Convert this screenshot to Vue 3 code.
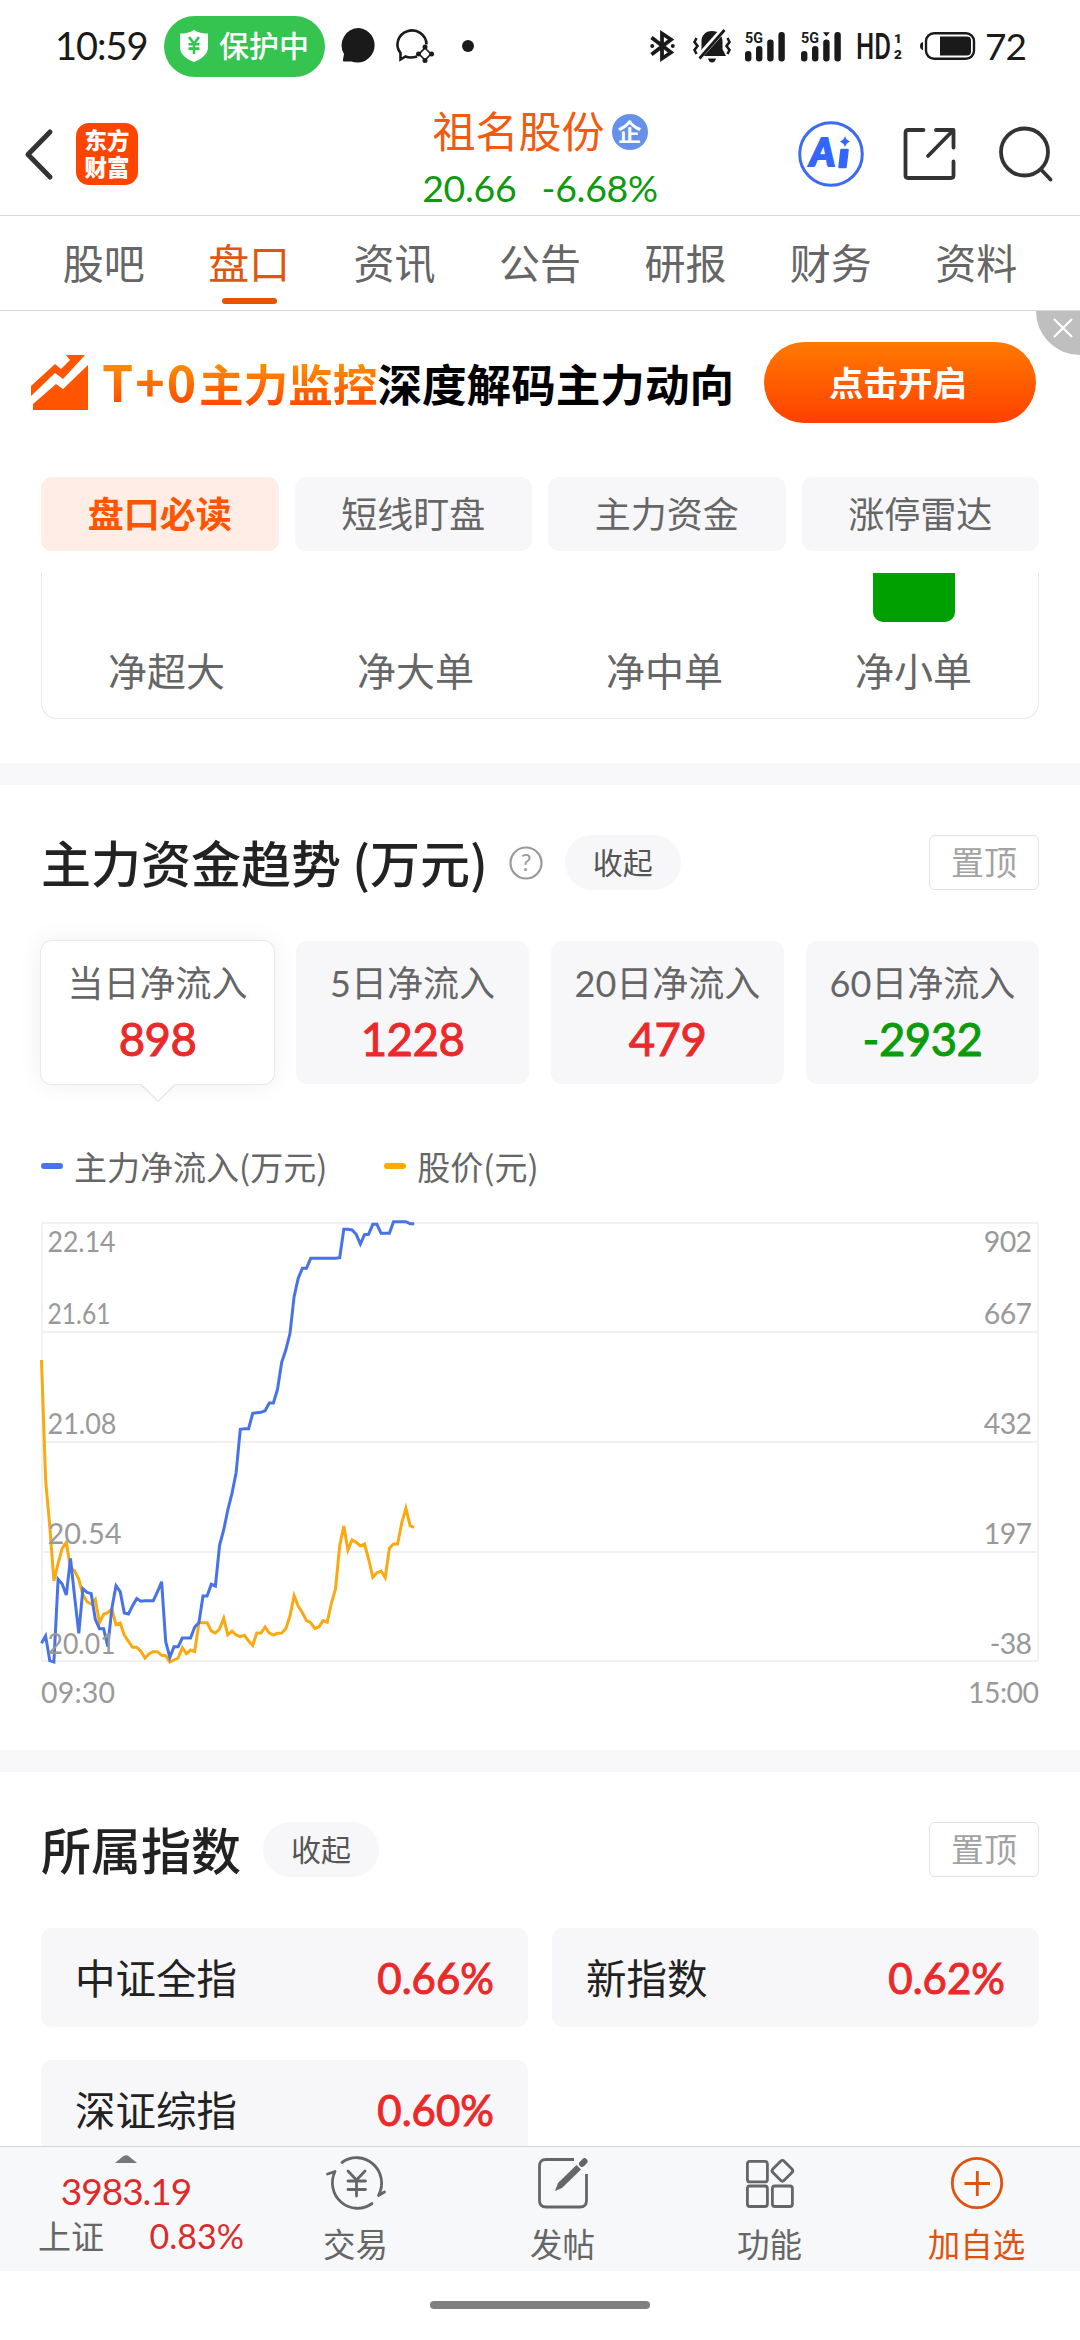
<template>
  <div class="screen">
    <div class="status">
      <span class="clock">10:59</span>
      <div class="shield-pill">
        <svg width="28" height="32" viewBox="0 0 28 32">
          <path d="M14 0C18 2.600 23 3.600 28 3.600V17C28 24 22 29 14 32C6 29 0 24 0 17V3.600C5 3.600 10 2.600 14 0Z" fill="#fff" />
          <path d="M9 7L14 13.500L19 7M14 13.500V24M8.500 14.200H19.500M8.500 18.600H19.500" fill="none" stroke="#36c450" stroke-width="2.600" />
        </svg>
        <span>保护中</span>
      </div>
      <svg class="bubble" width="36" height="36" viewBox="0 0 36 36">
        <path d="M18 0A17.300 17.300 0 1 1 10.500 33.500H3Q1.500 33.500 2 31.500L3 26A17.300 17.300 0 0 1 18 0Z" fill="#1a1a1a" />
      </svg>
      <svg class="bubble-star" width="39" height="34" viewBox="0 0 39 34" fill="none" stroke="#1a1a1a">
        <path d="M22 27.500Q15 29.500 10.500 27.500L5.500 30.500V24A14.500 14 0 1 1 31.500 15.500" stroke-width="2.600" />
        <path d="M30 19L36 25L30 31L24 25Z" stroke-width="1.600" fill="#fff" />
        <g fill="#1a1a1a" stroke="none">
          <circle cx="30" cy="18" r="2.500" /><circle cx="36.500" cy="25" r="2.500" />
          <circle cx="30" cy="31.500" r="2.500" /><circle cx="23.500" cy="25" r="2.500" />
        </g>
      </svg>
      <i class="dot"></i>

      <div class="status-right">
        <svg width="25" height="32" viewBox="0 0 25 32">
          <path d="M1.500 7.500L21 22.500L12 28.500V3.500L21 9.500L1.500 24.500" fill="none" stroke="#1a1a1a" stroke-width="3.800" />
          <circle cx="2.200" cy="16" r="2" fill="#1a1a1a" /><circle cx="22.800" cy="16" r="2" fill="#1a1a1a" />
        </svg>
        <svg class="bell" width="38" height="34" viewBox="0 0 38 34">
          <path d="M19 2C26 2 29.500 7 29.500 12V20L33 27H5L8.500 20V12C8.500 7 12 2 19 2ZM15 29.500H23Q22 33.500 19 33.500Q16 33.500 15 29.500Z" fill="#1a1a1a" />
          <path d="M5 29L31 0" stroke="#fff" stroke-width="6" />
          <path d="M6.500 29.500L31.500 1" stroke="#1a1a1a" stroke-width="2.800" />
          <path d="M3.500 9L1.500 13L4.500 17L1.500 21L3.500 25M34.500 9L36.500 13L33.500 17L36.500 21L34.500 25" fill="none" stroke="#1a1a1a" stroke-width="2.600" />
        </svg>
        <svg v-for="n in 2" :key="n" :class="'signal signal-' + n" width="40" height="31" viewBox="0 0 40 31" fill="#1a1a1a">
          <text x="0" y="12" font-size="15" font-weight="700" textLength="18" lengthAdjust="spacingAndGlyphs">5G</text>
          <rect x="0" y="20" width="6.400" height="10.500" rx="3" />
          <rect x="11" y="15" width="6.400" height="15.500" rx="3" />
          <rect x="22.200" y="8.500" width="6.400" height="22" rx="3" />
          <rect x="33.400" y="1" width="6.400" height="29.500" rx="3" />
          <path v-if="n === 2" d="M22 1.300H28.800L25.400 5.500Z" />
        </svg>
        <svg class="hd" width="46" height="30" viewBox="0 0 46 30" fill="#1a1a1a">
          <text x="-1" y="27.500" font-size="36" font-weight="500" textLength="35" lengthAdjust="spacingAndGlyphs">HD</text>
          <text x="37" y="12" font-size="13.500" font-weight="900">1</text>
          <text x="37" y="28" font-size="13.500" font-weight="900">2</text>
        </svg>
        <svg class="battery" width="56" height="28" viewBox="0 0 56 28">
          <path d="M3 10Q0 10.500 0 14Q0 17.500 3 18Z" fill="#1a1a1a" />
          <rect x="6" y="1.200" width="48" height="25.600" rx="8" fill="none" stroke="#1a1a1a" stroke-width="2.400" />
          <path d="M20 4.500H47Q51 4.500 51 8.500V19.500Q51 23.500 47 23.500H20Z" fill="#1a1a1a" />
        </svg>
        <span class="level">72</span>
      </div>
    </div>

    <header class="header">
      <div class="header-side">
        <svg class="back" width="30" height="52" viewBox="0 0 30 52" fill="none" stroke="#333" stroke-width="5" stroke-linecap="round" stroke-linejoin="round">
          <path d="M26 4L4 26.500L26 49" />
        </svg>
        <div class="logo"><span>东方</span><span>财富</span></div>
      </div>
      <div class="stock">
        <div class="stock-name">祖名股份<span class="corp">企</span></div>
        <div class="stock-price"><span>20.66</span><span>-6.68%</span></div>
      </div>
      <div class="header-side header-actions">
        <svg width="66" height="66" viewBox="0 0 66 66">
          <circle cx="33" cy="33" r="31.300" fill="none" stroke="#3d6af2" stroke-width="3" />
          <text x="12" y="45" font-size="37" font-weight="900" font-style="italic" fill="#3366ff" stroke="#3366ff" stroke-width="2" textLength="25" lengthAdjust="spacingAndGlyphs">A</text>
          <path d="M43.500 29H49.500L47.500 46H41.500Z" fill="#3366ff" stroke="#3366ff" stroke-width="2.500" stroke-linejoin="round" />
          <path d="M47 15Q48 19 52 20.500Q48 22 47 26Q45.500 22 42 20.500Q46 19 47 15Z" fill="#3366ff" />
        </svg>
        <svg class="share" width="54" height="54" viewBox="0 0 54 54" fill="none" stroke="#333" stroke-width="3.800" stroke-linecap="round" stroke-linejoin="round">
          <path d="M20.500 3H5Q2.500 3 2.500 5.500V48.500Q2.500 51 5 51H48Q50.500 51 50.500 48.500V34.500M33 3H50.500V20.500M50 3.500L25 29" />
        </svg>
        <svg width="54" height="56" viewBox="0 0 54 56" fill="none" stroke="#333" stroke-width="3.800" stroke-linecap="round">
          <circle cx="25.500" cy="26" r="23.500" /><path d="M42 43.500L51.500 53.500" />
        </svg>
      </div>
    </header>

    <nav class="tabs">
      <span v-for="t in tabs" :key="t" :class="['tab', { active: t === activeTab }]">{{ t }}</span>
    </nav>

    <div class="banner">
      <svg width="58" height="55" viewBox="0 0 58 55" fill="#ff5500">
        <path d="M0 31L24 9L30 14L39 5L35 0H54L32 24L24 18L0 41Z" />
        <path d="M2 49L25 29L32 34L57 10V55H2Z" />
      </svg>
      <div class="slogan"><span class="hot"><span class="t0">T+0</span>主力监控</span><span>深度解码主力动向</span></div>
      <button class="open">点击开启</button>
      <div class="close">
        <svg width="20" height="20" viewBox="0 0 20 20"><path d="M1 1L19 19M19 1L1 19" stroke="#fff" stroke-width="2" /></svg>
      </div>
    </div>

    <div class="chips">
      <span v-for="(c, i) in chips" :key="c" :class="['chip', { active: i === 0 }]">{{ c }}</span>
    </div>

    <div class="order-box">
      <div v-for="o in orders" :key="o" class="order">
        <i v-if="o === '净小单'" class="bar"></i>
        <span>{{ o }}</span>
      </div>
    </div>

    <section class="section trend">
      <div class="section-head">
        <h2>主力资金趋势 <span class="unit">(万元)</span></h2>
        <svg class="help" width="34" height="34" viewBox="0 0 34 34">
          <circle cx="17" cy="17" r="15.500" fill="none" stroke="#999" stroke-width="2.200" />
          <text x="17" y="25" font-size="24" text-anchor="middle" fill="#999">?</text>
        </svg>
        <span class="fold">收起</span>
        <span class="pin">置顶</span>
      </div>

      <div class="flows">
        <div v-for="(f, i) in flows" :key="f.label" :class="['flow', { active: i === 0 }]">
          <span class="flow-label">{{ f.label }}</span>
          <span :class="['flow-value', f.value < 0 ? 'down' : 'up']">{{ f.value }}</span>
          <svg v-if="i === 0" class="pointer" width="36" height="20" viewBox="0 0 36 20">
            <path d="M1 0V1.500L18 18.500L35 1.500V0" fill="#fff" />
            <path d="M1 1.500L18 18.500L35 1.500" fill="none" stroke="#e6e6e6" stroke-width="1.200" />
          </svg>
        </div>
      </div>

      <div class="legend">
        <span class="legend-item"><i class="mark blue"></i>主力净流入(万元)</span>
        <span class="legend-item"><i class="mark orange"></i>股价(元)</span>
      </div>

      <svg class="chart" width="1080" height="500" viewBox="0 0 1080 500">
        <g fill="none" stroke="#f1f1f1" stroke-width="2">
          <rect x="42" y="13" width="996" height="438" />
          <path d="M41 122H1039M41 232H1039M41 342H1039" />
        </g>
        <polyline :points="toPoints(price)" class="line price-line" />
        <polyline :points="toPoints(inflow)" class="line inflow-line" />
        <g class="axis">
          <text v-for="a in axis" :key="a.left" x="47.500" :y="a.y" :textLength="a.w" lengthAdjust="spacingAndGlyphs">{{ a.left }}</text>
          <text v-for="a in axis" :key="a.right" class="right" x="1031.500" :y="a.y" text-anchor="end">{{ a.right }}</text>
          <text x="41" y="492.500" textLength="74">09:30</text>
          <text x="1039" y="492.500" text-anchor="end" textLength="71">15:00</text>
        </g>
      </svg>
    </section>

    <section class="section indexes">
      <div class="section-head">
        <h2>所属指数</h2>
        <span class="fold">收起</span>
        <span class="pin">置顶</span>
      </div>
      <div class="index-grid">
        <div v-for="x in indexes" :key="x.name" class="index">
          <span class="index-name">{{ x.name }}</span>
          <span class="pct">{{ x.pct }}</span>
        </div>
      </div>
    </section>

    <footer class="bottom">
      <div class="market">
        <svg width="22" height="8" viewBox="0 0 22 8"><path d="M0 8L8.500 1Q11 -0.500 13.500 1L22 8Z" fill="#77777b" /></svg>
        <span class="point">3983.19</span>
        <div class="market-row"><span>上证</span><span class="rate">0.83%</span></div>
      </div>
      <div class="action">
        <svg width="60" height="56" viewBox="0 0 60 56" fill="none" stroke="#666" stroke-width="2.800" stroke-linecap="round" stroke-linejoin="round">
          <path d="M16 7.500A25 25.500 0 0 1 52.500 40.500L58.500 37M1.500 19L9 16.500A25 25.500 0 0 0 46 48.500" />
          <path d="M22 16L30.500 25L39 16M30.500 25V41M22 26H39.500M22 34.500H39.500" />
        </svg>
        <span>交易</span>
      </div>
      <div class="action">
        <svg width="60" height="56" viewBox="0 0 60 56" fill="none" stroke="#666" stroke-width="2.800">
          <path d="M41 4.500H13Q6.500 4.500 6.500 11V45.500Q6.500 52 13 52H47Q53.500 52 53.500 45.500V19" />
          <path d="M22 36L25 28L43.500 10L48 14.500L29 33Z" fill="#666" stroke="none" />
          <path d="M49 8.800L51.500 6.300" stroke-width="6" stroke-linecap="round" />
        </svg>
        <span>发帖</span>
      </div>
      <div class="action">
        <svg width="60" height="56" viewBox="0 0 60 56" fill="none" stroke="#666" stroke-width="2.800">
          <rect x="7.400" y="6.400" width="20" height="20.500" rx="2.500" />
          <rect x="7.400" y="31" width="20" height="20.500" rx="2.500" />
          <rect x="32.400" y="31" width="20" height="20.500" rx="2.500" />
          <rect x="34.400" y="7.800" width="16" height="16" rx="2.500" transform="rotate(45 42.400 15.800)" />
        </svg>
        <span>功能</span>
      </div>
      <div class="action add">
        <svg width="60" height="56" viewBox="0 0 60 56" fill="none" stroke="#e0530f" stroke-width="2.800">
          <circle cx="30" cy="28" r="24.700" /><path d="M17.500 28.500H43M30.300 16V41" />
        </svg>
        <span>加自选</span>
      </div>
    </footer>
    <div class="home"><i></i></div>
  </div>
</template>

<script setup>
import { ref } from 'vue'

const tabs = ['股吧', '盘口', '资讯', '公告', '研报', '财务', '资料']
const activeTab = ref('盘口')
const chips = ['盘口必读', '短线盯盘', '主力资金', '涨停雷达']
const orders = ['净超大', '净大单', '净中单', '净小单']

const flows = [
  { label: '当日净流入', value: 898 },
  { label: '5日净流入', value: 1228 },
  { label: '20日净流入', value: 479 },
  { label: '60日净流入', value: -2932 }
]

const indexes = [
  { name: '中证全指', pct: '0.66%' },
  { name: '新指数', pct: '0.62%' },
  { name: '深证综指', pct: '0.60%' }
]

const axis = [
  { left: '22.14', right: '902', y: 42, w: 68 },
  { left: '21.61', right: '667', y: 114, w: 63 },
  { left: '21.08', right: '432', y: 224, w: 69 },
  { left: '20.54', right: '197', y: 334, w: 74 },
  { left: '20.01', right: '-38', y: 444, w: 68 }
]

// one sample per minute from 09:30, smaller is higher on the plot
const inflow = [
  1330, 1308, 1382, 1386, 1138, 1152, 1185, 1075, 1190, 1300, 1166, 1177, 1181, 1258, 1286, 1286,
  1340, 1225, 1157, 1175, 1239, 1242, 1217, 1196, 1204, 1202, 1202, 1202, 1175, 1145, 1325, 1372,
  1340, 1340, 1314, 1314, 1314, 1281, 1268, 1188, 1188, 1153, 1158, 1035, 990, 930, 880, 818,
  688, 686, 686, 640, 638, 637, 632, 609, 609, 568, 487, 450, 400, 290, 235, 205,
  205, 175, 175, 175, 175, 175, 175, 175, 173, 88, 88, 90, 103, 132, 104, 103,
  73, 73, 100, 100, 100, 65, 65, 65, 65, 71, 71
]
const price = [
  480, 840, 980, 1143, 1090, 1045, 1027, 1105, 1112, 1138, 1185, 1205, 1212, 1198, 1268, 1243,
  1238, 1227, 1274, 1269, 1305, 1324, 1342, 1342, 1354, 1374, 1361, 1355, 1355, 1366, 1367, 1386,
  1380, 1374, 1343, 1361, 1350, 1355, 1268, 1268, 1268, 1293, 1299, 1287, 1255, 1305, 1293, 1305,
  1310, 1306, 1323, 1336, 1299, 1299, 1281, 1299, 1305, 1300, 1299, 1286, 1248, 1187, 1218, 1238,
  1262, 1268, 1286, 1280, 1262, 1267, 1210, 1167, 1037, 978, 1050, 1020, 1027, 1038, 1032, 1077,
  1132, 1118, 1113, 1133, 1045, 1032, 1032, 968, 925, 977, 982
]

const MINUTE = 998 / 241

function toPoints(samples) {
  return samples.map((v, i) => `${(41.5 + i * MINUTE).toFixed(1)},${(v / 3 - 10).toFixed(1)}`).join(' ')
}
</script>

<style>
body {
  background: #fff;
}
</style>

<style scoped>
.screen {
  width: 1080px;
  height: 2340px;
  overflow: hidden;
  display: flex;
  flex-direction: column;
  background: #fff;
  color: #222;
  font-family: Lato, "Noto Sans CJK SC", sans-serif;
}
.screen > * {
  flex-shrink: 0;
  box-sizing: border-box;
}
svg {
  display: block;
  flex-shrink: 0;
  overflow: visible;
}
i {
  display: block;
}

.status {
  height: 92px;
  padding: 0 56px 0 55px;
  display: flex;
  align-items: center;
  color: #1a1a1a;
}
.clock {
  width: 109px;
  margin-top: -2px;
  font-size: 38px;
  letter-spacing: -1px;
}
.shield-pill {
  width: 161px;
  height: 61px;
  border-radius: 31px;
  background: #36c450;
  color: #fff;
  display: flex;
  align-items: center;
  justify-content: center;
  gap: 11px;
  font-size: 30px;
  font-weight: 500;
  line-height: 58px;
}
.shield-pill span {
  margin-top: -2px;
}
.bubble {
  margin-left: 16px;
}
.bubble-star {
  margin-left: 18px;
}
.dot {
  width: 12px;
  height: 12px;
  margin-left: 28px;
  border-radius: 50%;
  background: #1a1a1a;
}
.status-right {
  display: flex;
  align-items: center;
  margin-left: auto;
}
.signal text,
.hd text {
  font-family: Roboto, sans-serif;
}
.bell {
  margin-left: 18px;
}
.signal {
  margin-left: 14px;
}
.signal-2 {
  margin-left: 16px;
}
.hd {
  margin-left: 16px;
}
.battery {
  margin-left: 17px;
}
.level {
  width: 39px;
  margin: -2px 0 0 9px;
  font-size: 37px;
  letter-spacing: -1px;
}

.header {
  height: 124px;
  display: flex;
  justify-content: space-between;
  align-items: center;
  border-bottom: 1px solid #d8d8d8;
}
.header-side {
  width: 300px;
  box-sizing: border-box;
  display: flex;
  align-items: center;
}
.header-actions {
  justify-content: flex-end;
  padding-right: 27px;
}
.back {
  margin-left: 24px;
}
.logo {
  width: 62px;
  height: 62px;
  margin-left: 22px;
  border-radius: 13px;
  background: #ff4400;
  color: #fff;
  display: flex;
  flex-direction: column;
  align-items: center;
  justify-content: center;
  font-size: 22.5px;
  font-weight: 900;
  line-height: 27px;
}
.share {
  margin: 0 42px 0 39px;
}
.stock {
  display: flex;
  flex-direction: column;
  align-items: center;
  padding-top: 12px;
}
.stock-name {
  display: flex;
  align-items: center;
  font-size: 43px;
  line-height: 56px;
  color: #f25a0e;
}
.corp {
  width: 36px;
  height: 36px;
  margin-left: 7px;
  border-radius: 50%;
  background: #6691ea;
  color: #fff;
  font-size: 24px;
  font-weight: 700;
  line-height: 35px;
  text-align: center;
}
.stock-price {
  display: flex;
  gap: 25px;
  font-size: 37.5px;
  line-height: 55px;
  letter-spacing: -0.3px;
  color: #0e9a0e;
}

.tabs {
  height: 95px;
  padding: 0 31px;
  display: flex;
  border-bottom: 1px solid #d8d8d8;
}
.tab {
  flex: 1;
  position: relative;
  font-size: 41px;
  line-height: 95px;
  text-align: center;
  color: #666;
}
.tab.active {
  color: #e0560f;
}
.tab.active::after {
  content: '';
  position: absolute;
  left: 50%;
  bottom: 6px;
  width: 55px;
  height: 6px;
  margin-left: -27px;
  border-radius: 3px;
  background: #e85200;
}

.banner {
  position: relative;
  height: 166px;
  padding: 0 44px 23px 31px;
  display: flex;
  align-items: center;
}
.slogan {
  margin-left: 13px;
  display: flex;
  align-items: baseline;
  font-size: 44.6px;
  font-weight: 700;
  line-height: 60px;
  color: #000;
  white-space: nowrap;
}
.hot {
  background: linear-gradient(#ff9500 15%, #ff4a00 85%);
  background-clip: text;
  color: transparent;
}
.t0 {
  display: inline-block;
  width: 97px;
  font-family: "Noto Sans CJK SC", sans-serif;
  font-size: 50px;
  letter-spacing: 2px;
}
.open {
  width: 272px;
  height: 81px;
  margin-left: auto;
  padding: 0 4px 3px 0;
  border: 0;
  border-radius: 41px;
  background: linear-gradient(#ff7a00, #ff4000);
  color: #fff;
  font: 700 34.5px "Noto Sans CJK SC", sans-serif;
}
.close {
  position: absolute;
  top: 0;
  right: 0;
  width: 44px;
  height: 44px;
  border-bottom-left-radius: 44px;
  background: #bfbfbf;
}
.close svg {
  margin: 7px 0 0 17px;
}

.chips {
  height: 74px;
  margin: 0 41px;
  display: flex;
  gap: 16px;
}
.chip {
  flex: 1;
  border-radius: 11px;
  background: #f7f7fa;
  color: #666;
  font-size: 36px;
  line-height: 74px;
  text-align: center;
}
.chip.active {
  background: #ffede6;
  color: #ff5500;
  font-weight: 700;
}

.order-box {
  height: 146px;
  margin: 22px 41px 44px;
  display: flex;
  border: 1px solid #e8e8e8;
  border-top: 0;
  border-radius: 0 0 16px 16px;
}
.order {
  flex: 1;
  display: flex;
  flex-direction: column;
  align-items: center;
  justify-content: flex-end;
  font-size: 39px;
  line-height: 60px;
  color: #666;
}
.order span {
  margin-bottom: 17px;
}
.bar {
  width: 82px;
  height: 49px;
  margin-bottom: auto;
  border-radius: 0 0 10px 10px;
  background: #00a000;
}

.section {
  border-top: 22px solid #f8f8fa;
  padding: 50px 41px 0;
}
.trend {
  height: 987px;
}
.section-head {
  height: 55px;
  display: flex;
  align-items: center;
}
h2 {
  margin: -2px 0 0;
  font-size: 50px;
  font-weight: 500;
  line-height: 55px;
  white-space: nowrap;
  font-family: "Noto Sans CJK SC", sans-serif;
}
.help {
  margin-left: 21px;
}
.fold {
  width: 116px;
  height: 55px;
  margin-left: 22px;
  border-radius: 28px;
  background: #f7f7fa;
  color: #555;
  font-size: 30px;
  line-height: 55px;
  text-align: center;
}
.pin {
  width: 108px;
  height: 53px;
  margin-left: auto;
  border: 1px solid #e3e3e3;
  border-radius: 6px;
  color: #a3a3a3;
  font-size: 33px;
  line-height: 53px;
  text-align: center;
}

.flows {
  margin-top: 51px;
  display: flex;
  gap: 22px;
}
.flow {
  flex: 1;
  height: 143px;
  box-sizing: border-box;
  padding-top: 15px;
  display: flex;
  flex-direction: column;
  align-items: center;
  border-radius: 11px;
  background: #f7f7fa;
}
.flow.active {
  position: relative;
  background: #fff;
  box-shadow: 0 0 0 1px #e8e8e8, 0 0 26px rgba(0, 0, 0, 0.07);
}
.flow-label {
  font-size: 36px;
  line-height: 54px;
  color: #666;
}
/* Lato has no medium weight, a thin stroke gives it */
.flow-value,
.pct {
  -webkit-text-stroke: 1px currentColor;
}
.flow-value {
  font-size: 45.5px;
  line-height: 58px;
  letter-spacing: -0.5px;
}
.up {
  color: #ea2a2a;
}
.down {
  color: #0a9c0a;
}
.pointer {
  position: absolute;
  top: 142px;
  left: 50%;
  margin-left: -18px;
}
.legend {
  margin-top: 57px;
  display: flex;
  gap: 57px;
  font-family: "Noto Sans CJK SC", sans-serif;
  font-size: 33px;
  line-height: 50px;
  color: #666;
}
.legend-item {
  display: flex;
  align-items: center;
}
.mark {
  width: 22px;
  height: 6px;
  margin-right: 11px;
  border-radius: 3px;
}
.blue {
  background: #4872f0;
}
.orange {
  background: #ffaa00;
}
.chart {
  margin: 19px -41px 0;
}
.line {
  fill: none;
  stroke-width: 3;
}
.inflow-line {
  stroke: #4872e8;
}
.price-line {
  stroke: #fba910;
}
.axis text {
  font-size: 28.5px;
  fill: #999;
}
.axis .right {
  letter-spacing: -0.6px;
}

.indexes {
  height: 396px;
  overflow: hidden;
}
.index-grid {
  margin-top: 51px;
  display: grid;
  grid-template-columns: 1fr 1fr;
  gap: 33px 24px;
}
.index {
  height: 99px;
  padding: 0 34px;
  display: flex;
  align-items: center;
  justify-content: space-between;
  border-radius: 11px;
  background: #f7f7fa;
  font-size: 40.5px;
}
.index-name {
  margin-top: -3px;
}
.pct {
  color: #ea2a2a;
  font-size: 42px;
}

.bottom {
  height: 125px;
  display: flex;
  border-top: 1px solid #d3d6da;
  background: #f7f8fa;
  color: #666;
}
.market {
  width: 252px;
  padding-top: 8px;
  display: flex;
  flex-direction: column;
  align-items: center;
}
.point {
  margin-top: 6px;
  font-size: 37px;
  line-height: 44px;
  letter-spacing: -1px;
  color: #dc2b2b;
}
.market-row {
  width: 206px;
  margin-left: 30px;
  display: flex;
  justify-content: space-between;
  font-size: 33px;
  line-height: 46px;
}
.rate {
  font-size: 34px;
  color: #dc2b2b;
}
.action {
  width: 207px;
  padding-top: 8px;
  display: flex;
  flex-direction: column;
  align-items: center;
  font-size: 32.5px;
  line-height: 50px;
}
.action span {
  margin-top: 9px;
}
.action.add {
  color: #e0530f;
}
.home {
  padding-top: 30px;
}
.home i {
  width: 220px;
  height: 8px;
  margin: 0 auto;
  border-radius: 4px;
  background: #808080;
}
</style>
